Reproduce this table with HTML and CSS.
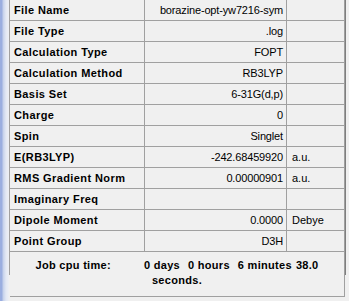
FILE: index.html
```html
<!DOCTYPE html>
<html lang="en">
<head>
  <meta charset="UTF-8">
  <title>Summary</title>
  <link rel="stylesheet" href="styles.css">
</head>
<body>
  <div class="window">
    <!-- left frame strip -->
    <div class="edge"></div>

    <div class="panel">
      <div class="props">
        <div class="key">File Name</div><div class="val">borazine-opt-yw7216-sym</div><div class="unit"></div>
        <div class="key">File Type</div><div class="val">.log</div><div class="unit"></div>
        <div class="key">Calculation Type</div><div class="val">FOPT</div><div class="unit"></div>
        <div class="key">Calculation Method</div><div class="val">RB3LYP</div><div class="unit"></div>
        <div class="key">Basis Set</div><div class="val">6-31G(d,p)</div><div class="unit"></div>
        <div class="key">Charge</div><div class="val">0</div><div class="unit"></div>
        <div class="key">Spin</div><div class="val">Singlet</div><div class="unit"></div>
        <div class="key">E(RB3LYP)</div><div class="val">-242.68459920</div><div class="unit">a.u.</div>
        <div class="key">RMS Gradient Norm</div><div class="val">0.00000901</div><div class="unit">a.u.</div>
        <div class="key">Imaginary Freq</div><div class="val"></div><div class="unit"></div>
        <div class="key">Dipole Moment</div><div class="val">0.0000</div><div class="unit">Debye</div>
        <div class="key">Point Group</div><div class="val">D3H</div><div class="unit"></div>

        <!-- cpu time footer -->
        <div class="job">
          <span>Job cpu time:</span><span class="gap-lg">0 days</span><span class="gap">0 hours</span><span class="gap">6 minutes</span><span class="gap-sm">38.0</span><br>seconds.
        </div>
      </div>
    </div>
  </div>
</body>
</html>
```

FILE: styles.css
```css
/* General Reset */
* {
  margin: 0;
  padding: 0;
  box-sizing: border-box;
}

body {
  background-color: #f0f0f0;
  font-family: "Liberation Sans", Arial, sans-serif;
  font-size: 11px;
  color: #000;
  width: 349px;
  height: 301px;
  overflow: hidden;
}

.window {
  display: flex;
  height: 301px;
}

/* Aero-ish blue frame on the left */
.edge {
  width: 9px;
  background: linear-gradient(to right, #9aaee0 0, #9aaee0 2px, #c4d0ea 3px, #e2e8f4 6px, #eef0f4 9px);
}

.panel {
  border-left: 1px solid #a0a0a0;
  align-self: flex-start;
  border-right: 1px solid #7f7f7f;
  padding-bottom: 2px;
}

/* Property grid */
.props {
  display: grid;
  grid-template-columns: 135px 142px 58px;
  grid-auto-rows: 21px;
}

.props > div {
  border-right: 1px solid #a0a0a0;
  border-bottom: 1px solid #a0a0a0;
  line-height: 20px;
  white-space: nowrap;
  overflow: hidden;
}

.key {
  font-weight: bold;
  padding-left: 4px;
  letter-spacing: 0.4px;
}

.val {
  text-align: right;
  padding-right: 3px;
  letter-spacing: -0.15px;
}

.unit {
  padding-left: 5px;
}

.props > .job {
  grid-column: 1 / -1;
  height: 45px;
  font-weight: bold;
  text-align: center;
  line-height: 15px;
  padding-top: 6px;
  letter-spacing: 0.3px;
}

.job .gap-lg { margin-left: 33px; }
.job .gap { margin-left: 8px; }
.job .gap-sm { margin-left: 4px; }
```
